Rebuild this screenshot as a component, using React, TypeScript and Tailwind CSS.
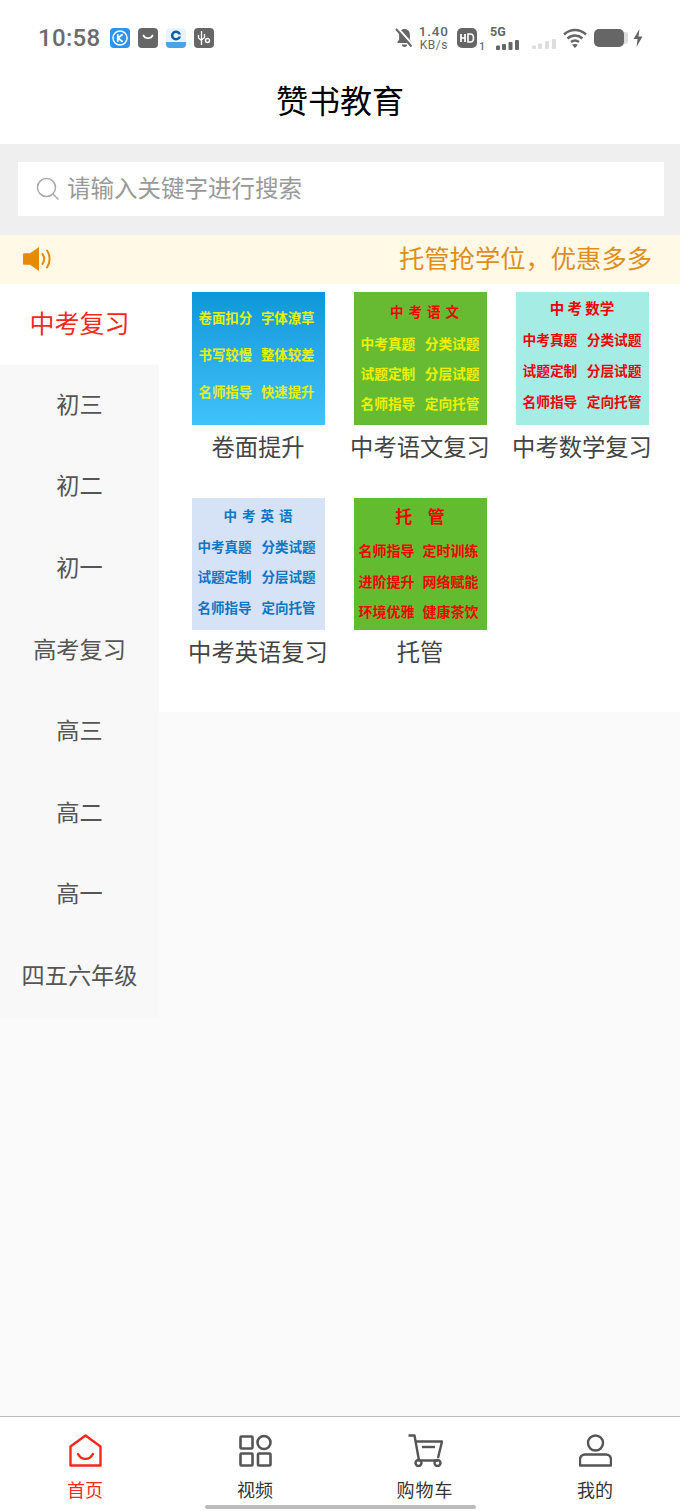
import React from 'react';

const thumbs = [
  {
    caption: '卷面提升',
    bg: 'bg-gradient-to-b from-[#0a97d8] to-[#40c2fc]',
    rowColor: 'text-[#e6f000]',
    titleColor: '',
    title: '',
    titleSize: 'text-[13px]',
    textSize: 'text-[13.4px]',
    height: 'h-[133px]',
    pad: 'pt-[7px]',
    rowH: 'h-[37px]',
    titleH: '',
    px: 'pl-[7px] pr-[10px]',
    rows: [
      ['卷面扣分', '字体潦草'],
      ['书写较慢', '整体较差'],
      ['名师指导', '快速提升'],
    ],
  },
  {
    caption: '中考语文复习',
    bg: 'bg-[#67bb33]',
    rowColor: 'text-[#eef000]',
    titleColor: 'text-[#f50000]',
    title: '中 考 语 文',
    titleSize: 'text-[13.5px] [word-spacing:2px] pl-[9px]',
    textSize: 'text-[13.7px]',
    height: 'h-[133px]',
    pad: 'pt-[10px]',
    rowH: 'h-[30px]',
    titleH: 'h-[20px] mb-[7px]',
    px: 'px-[7px]',
    rows: [
      ['中考真题', '分类试题'],
      ['试题定制', '分层试题'],
      ['名师指导', '定向托管'],
    ],
  },
  {
    caption: '中考数学复习',
    bg: 'bg-[#a5ece4]',
    rowColor: 'text-[#f00000]',
    titleColor: 'text-[#f00000]',
    title: '中 考 数学',
    titleSize: 'text-[14.5px]',
    textSize: 'text-[13.7px]',
    height: 'h-[133px]',
    pad: 'pt-[6px]',
    rowH: 'h-[31px]',
    titleH: 'h-[20px] mb-[6px]',
    px: 'pl-[7px] pr-[7px]',
    rows: [
      ['中考真题', '分类试题'],
      ['试题定制', '分层试题'],
      ['名师指导', '定向托管'],
    ],
  },
  {
    caption: '中考英语复习',
    bg: 'bg-[#d6e2f5]',
    rowColor: 'text-[#0b76c4]',
    titleColor: 'text-[#0b76c4]',
    title: '中 考 英 语',
    titleSize: 'text-[13.5px] [word-spacing:2px]',
    textSize: 'text-[13.5px]',
    height: 'h-[132px]',
    pad: 'pt-[8px]',
    rowH: 'h-[30.5px]',
    titleH: 'h-[20px] mb-[5px]',
    px: 'pl-[6px] pr-[9px]',
    rows: [
      ['中考真题', '分类试题'],
      ['试题定制', '分层试题'],
      ['名师指导', '定向托管'],
    ],
  },
  {
    caption: '托管',
    bg: 'bg-[#63bb2f]',
    rowColor: 'text-[#f50000]',
    titleColor: 'text-[#f50000]',
    title: '托\u00a0\u00a0\u00a0\u00a0管',
    titleSize: 'text-[17px]',
    textSize: 'text-[14px]',
    height: 'h-[132px]',
    pad: 'pt-[5px]',
    rowH: 'h-[30.5px]',
    titleH: 'h-[24px] mb-[8px]',
    px: 'pl-[5px] pr-[8px]',
    rows: [
      ['名师指导', '定时训练'],
      ['进阶提升', '网络赋能'],
      ['环境优雅', '健康茶饮'],
    ],
  },
];

const sideItems = ['中考复习', '初三', '初二', '初一', '高考复习', '高三', '高二', '高一', '四五六年级'];

function Thumb({ item }: { item: (typeof thumbs)[number] }) {
  return (
    <div className="flex flex-col items-center h-[206px]">
      <div className={`w-[133px] font-bold leading-none ${item.height} ${item.textSize} ${item.bg} ${item.pad}`}>
        {item.title && (
          <div className={`flex items-center justify-center ${item.titleH} ${item.titleSize} ${item.titleColor}`}>
            {item.title}
          </div>
        )}
        {item.rows.map((row) => (
          <div key={row[0]} className={`flex items-center justify-between ${item.rowH} ${item.px} ${item.rowColor}`}>
            <span>{row[0]}</span>
            <span>{row[1]}</span>
          </div>
        ))}
      </div>
      <div className="mt-[6px] text-[23.3px] leading-[31px] text-[#444] whitespace-nowrap">{item.caption}</div>
    </div>
  );
}

function StatusBar() {
  return (
    <div className="flex items-center h-[76px] pl-[38px] pr-[37px] bg-white">
      <span className="w-[62px] font-['Roboto',sans-serif] font-medium text-[24px] tracking-[0.3px] text-[#6b6b6b] leading-none">10:58</span>
      <div className="flex items-center gap-[8px] ml-[10px]">
        <svg width="20" height="20" viewBox="0 0 20 20">
          <rect width="20" height="20" rx="4" fill="#2b93f5" />
          <circle cx="10" cy="10" r="7" fill="none" stroke="#fff" strokeWidth="1.5" />
          <path d="M7.8 6.2v7.6M12.6 6.2 8 10l4.6 3.8" fill="none" stroke="#fff" strokeWidth="1.8" />
        </svg>
        <svg width="20" height="20" viewBox="0 0 20 20">
          <rect width="20" height="20" rx="4" fill="#666" />
          <path d="M5.5 7.5c1.5 3.5 7.5 3.5 9 0" fill="none" stroke="#fff" strokeWidth="1.8" strokeLinecap="round" />
        </svg>
        <svg width="20" height="20" viewBox="0 0 20 20">
          <rect width="20" height="20" rx="4" fill="#e8f3fb" />
          <path d="M0 14h20v2a4 4 0 0 1-4 4H4a4 4 0 0 1-4-4z" fill="#4da3e3" />
          <circle cx="10" cy="7.5" r="3.8" fill="none" stroke="#0b5ea8" strokeWidth="2.6" />
          <rect x="11" y="6.5" width="4" height="2" fill="#e8f3fb" />
        </svg>
        <svg width="20" height="20" viewBox="0 0 20 20">
          <rect width="20" height="20" rx="4" fill="#666" />
          <path d="M7.5 3v14M4.5 7v3l3 2.5M10.5 6v3.5l-3 2.5" fill="none" stroke="#fff" strokeWidth="1.3" />
          <circle cx="13.5" cy="12.5" r="2" fill="none" stroke="#fff" strokeWidth="1.4" />
        </svg>
      </div>
      <div className="ml-auto flex items-center">
        <svg width="19" height="20" viewBox="0 0 19 20">
          <path d="M9.5 1c3.4 0 5.4 2.500 5.400 6v4.500l2.100 3.500H2l2.100-3.500V7c0-3.500 2-6 5.400-6zM7 16.500h5a2.500 2.500 0 0 1-5 0z" fill="#666" />
          <path d="M2.800 0 18.500 17.500" stroke="#fff" strokeWidth="2" />
          <path d="M1 1 16.500 18.500" stroke="#666" strokeWidth="2" />
        </svg>
        <div className="ml-[4px] w-[31px] flex flex-col items-center text-[#666] font-['Roboto',sans-serif] leading-none">
          <span className="text-[13.500px] font-medium tracking-[0.8px]">1.40</span>
          <span className="text-[12px] tracking-[0.5px]">KB/s</span>
        </div>
        <svg className="ml-[8px]" width="20" height="20" viewBox="0 0 20 20">
          <rect width="20" height="20" rx="5" fill="#666" />
          <path d="M4 6v8M8 6v8M4 10h4" stroke="#fff" strokeWidth="1.700" fill="none" />
          <path d="M11 6v8h2.500c2 0 3-1.500 3-4s-1-4-3-4z" stroke="#fff" strokeWidth="1.600" fill="none" />
        </svg>
        <span className="self-end mb-[-1px] ml-[2px] text-[10px] leading-none text-[#666] font-['Roboto',sans-serif] font-medium">1</span>
        <div className="ml-[5px] w-[30px] flex flex-col items-start">
          <span className="text-[12.5px] h-[12.5px] leading-none font-bold text-[#666] font-['Roboto',sans-serif] mb-[1px]">5G</span>
          <svg width="30" height="11" viewBox="0 0 30 11">
            <rect x="6" y="6.500" width="4" height="4.500" rx="1" fill="#666" />
            <rect x="12" y="5" width="4" height="6" rx="1" fill="#666" />
            <rect x="18.500" y="3" width="4" height="8" rx="1" fill="#666" />
            <rect x="25" y="1" width="4" height="10" rx="1" fill="#666" />
          </svg>
        </div>
        <svg className="ml-[12px] mt-[10px]" width="24" height="11" viewBox="0 0 24 11">
          <rect x="0" y="7.500" width="4" height="3.500" rx="1" fill="#ddd" />
          <rect x="6" y="5.500" width="4" height="5.500" rx="1" fill="#ddd" />
          <rect x="13" y="3" width="4" height="8" rx="1" fill="#ddd" />
          <rect x="20" y="1" width="4" height="10" rx="1" fill="#ddd" />
        </svg>
        <svg className="ml-[7px]" width="24" height="20" viewBox="0 0 24 20">
          <path d="M1 6.500c6.500-6 15.500-6 22 0M4.500 10.500c4.500-4 10.500-4 15 0M8 14c2.500-2 5.500-2 8 0" fill="none" stroke="#666" strokeWidth="2.400" />
          <path d="M12 20l-3-3.200c1.800-1.100 4.200-1.100 6 0z" fill="#666" />
        </svg>
        <svg className="ml-[7px]" width="34" height="18" viewBox="0 0 34 18">
          <rect width="30" height="18" rx="5" fill="#666" />
          <path d="M30 3h1a3 3 0 0 1 3 3v6a3 3 0 0 1-3 3h-1z" fill="#ddd" />
        </svg>
        <svg className="ml-[5px]" width="10" height="18" viewBox="0 0 10 18">
          <path d="M6.500 0 0.500 10H4.500L3.500 18 9.500 7.500H5.500z" fill="#666" />
        </svg>
      </div>
    </div>
  );
}

export default function App() {
  return (
    <div className="relative flex flex-col w-[680px] h-[1511px] overflow-hidden bg-[#fafafa] font-['Noto_Sans_CJK_SC','Noto_Sans',sans-serif]">
      <StatusBar />
      <div className="flex items-center justify-center h-[68px] pb-[22px] bg-white text-[32px] leading-none text-black">赞书教育</div>

      <div className="h-[91px] pt-[18px] px-[18px] pr-[16px] bg-[#efefef]">
        <div className="flex items-center h-[54px] pl-[18px] bg-white">
          <svg width="24" height="24" viewBox="0 0 24 24" fill="none" stroke="#aaa" strokeWidth="1.500">
            <circle cx="10.500" cy="10.500" r="9" />
            <path d="m17 17 5.500 5.500" />
          </svg>
          <span className="ml-[7px] pb-[2px] text-[23.500px] leading-none text-[#999]">请输入关键字进行搜索</span>
        </div>
      </div>

      <div className="flex items-center justify-between h-[49px] pl-[23px] pr-[28px] bg-[#fff9e6]">
        <svg className="mb-[2px]" width="30" height="24" viewBox="0 0 30 24" fill="none">
          <path d="M0 7.500c0-.800.600-1.300 1.300-1.300H7L16 0v24l-9-6.200H1.300C.600 17.800 0 17.300 0 16.500z" fill="#e8890c" />
          <path d="M19.500 7c2 3 2 7 0 10M24 3.500c3.500 5 3.500 12 0 17" stroke="#e8890c" strokeWidth="2" strokeLinecap="round" />
        </svg>
        <span className="pb-[4px] text-[25.300px] leading-none text-[#e08d1c]">托管抢学位，优惠多多</span>
      </div>

      <div className="flex flex-1 items-start">
        <div className="w-[159px] bg-[#f8f8f8]">
          {sideItems.map((name, i) => (
            <div
              key={name}
              className={
                i === 0
                  ? 'flex items-center justify-center h-[81px] pb-[3px] bg-white text-[25px] text-[#f5281c]'
                  : 'flex items-center justify-center h-[81.600px] pb-[5px] text-[23.200px] text-[#555]'
              }
            >
              {name}
            </div>
          ))}
        </div>
        <div className="flex-1 h-[428px] bg-white pt-[8px] pl-[18px] grid grid-cols-[162px_162px_162px] content-start">
          {thumbs.map((t) => (
            <Thumb key={t.caption} item={t} />
          ))}
        </div>
      </div>

      <div className="grid grid-cols-4 h-[95px] bg-white border-t border-[#bbb] pt-[17px]">
        <div className="flex flex-col items-center">
          <svg width="33" height="33" viewBox="0 0 33 33" fill="none" stroke="#f5281c" strokeWidth="2.400" strokeLinejoin="round">
            <path d="M1.500 12.500 16.500 1.500 31.500 12.500V31.500H1.500Z" />
            <path d="M9 20c3.500 6.500 11.500 6.500 15 0" strokeLinecap="round" />
          </svg>
          <span className="mt-[9px] text-[18px] leading-[26px] text-[#f5281c]">首页</span>
        </div>
        <div className="flex flex-col items-center">
          <svg width="33" height="33" viewBox="0 0 33 33" fill="none" stroke="#555" strokeWidth="2.600" strokeLinejoin="round">
            <rect x="1.500" y="2.500" width="12" height="12" rx="1" />
            <circle cx="25" cy="8.500" r="6.500" />
            <rect x="1.500" y="19.500" width="12" height="12" rx="1" />
            <rect x="19" y="19.500" width="12.500" height="12" rx="1" />
          </svg>
          <span className="mt-[9px] text-[18px] leading-[26px] text-[#333]">视频</span>
        </div>
        <div className="flex flex-col items-center">
          <svg width="35" height="33" viewBox="0 0 35 33" fill="none" stroke="#555" strokeWidth="2.400" strokeLinejoin="round">
            <path d="M0.500 1.500H6.500L11 26.500H30" />
            <path d="M7.500 7.500H34L30 24" />
            <path d="M14 13H27" />
            <circle cx="10.500" cy="29" r="3" />
            <circle cx="29.500" cy="29" r="3" />
          </svg>
          <span className="mt-[9px] text-[18px] tracking-[1px] leading-[26px] text-[#333]">购物车</span>
        </div>
        <div className="flex flex-col items-center">
          <svg width="33" height="33" viewBox="0 0 33 33" fill="none" stroke="#555" strokeWidth="2.400" strokeLinejoin="round">
            <circle cx="16.500" cy="9" r="7.500" />
            <path d="M6 20.500H27a5 5 0 0 1 5 5V31.500H1V25.500a5 5 0 0 1 5-5Z" />
          </svg>
          <span className="mt-[9px] text-[18px] leading-[26px] text-[#333]">我的</span>
        </div>
      </div>

      {/* system home indicator sits over the tab bar */}
      <div className="absolute left-[205px] bottom-[2px] w-[271px] h-[4px] rounded-full bg-[#bbb]" />
    </div>
  );
}
